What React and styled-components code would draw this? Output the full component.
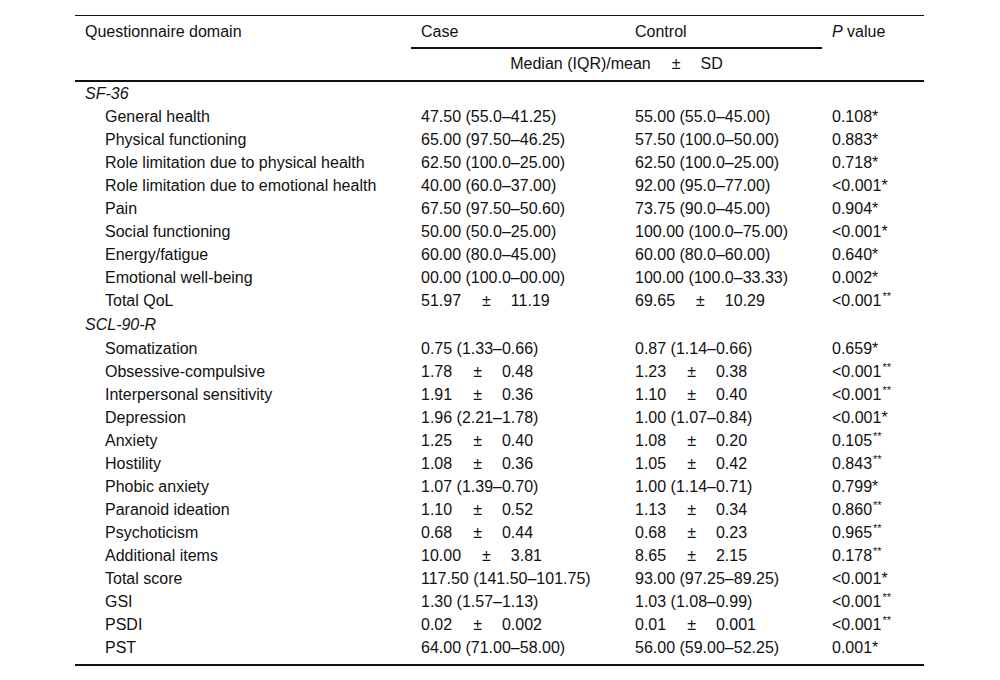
import React from "react";
import styled, { createGlobalStyle } from "styled-components";

const GlobalStyle = createGlobalStyle`
	body {
		margin: 0;
		background: #fff;
		color: #111;
		font-family: "Liberation Sans", Arial, sans-serif;
	}
`;

const sf36 = [
	["General health", "47.50 (55.0–41.25)", "55.00 (55.0–45.00)", "0.108", 1],
	["Physical functioning", "65.00 (97.50–46.25)", "57.50 (100.0–50.00)", "0.883", 1],
	["Role limitation due to physical health", "62.50 (100.0–25.00)", "62.50 (100.0–25.00)", "0.718", 1],
	["Role limitation due to emotional health", "40.00 (60.0–37.00)", "92.00 (95.0–77.00)", "<0.001", 1],
	["Pain", "67.50 (97.50–50.60)", "73.75 (90.0–45.00)", "0.904", 1],
	["Social functioning", "50.00 (50.0–25.00)", "100.00 (100.0–75.00)", "<0.001", 1],
	["Energy/fatigue", "60.00 (80.0–45.00)", "60.00 (80.0–60.00)", "0.640", 1],
	["Emotional well-being", "00.00 (100.0–00.00)", "100.00 (100.0–33.33)", "0.002", 1],
	["Total QoL", "51.97|11.19", "69.65|10.29", "<0.001", 2],
];

const scl90 = [
	["Somatization", "0.75 (1.33–0.66)", "0.87 (1.14–0.66)", "0.659", 1],
	["Obsessive-compulsive", "1.78|0.48", "1.23|0.38", "<0.001", 2],
	["Interpersonal sensitivity", "1.91|0.36", "1.10|0.40", "<0.001", 2],
	["Depression", "1.96 (2.21–1.78)", "1.00 (1.07–0.84)", "<0.001", 1],
	["Anxiety", "1.25|0.40", "1.08|0.20", "0.105", 2],
	["Hostility", "1.08|0.36", "1.05|0.42", "0.843", 2],
	["Phobic anxiety", "1.07 (1.39–0.70)", "1.00 (1.14–0.71)", "0.799", 1],
	["Paranoid ideation", "1.10|0.52", "1.13|0.34", "0.860", 2],
	["Psychoticism", "0.68|0.44", "0.68|0.23", "0.965", 2],
	["Additional items", "10.00|3.81", "8.65|2.15", "0.178", 2],
	["Total score", "117.50 (141.50–101.75)", "93.00 (97.25–89.25)", "<0.001", 1],
	["GSI", "1.30 (1.57–1.13)", "1.03 (1.08–0.99)", "<0.001", 2],
	["PSDI", "0.02|0.002", "0.01|0.001", "<0.001", 2],
	["PST", "64.00 (71.00–58.00)", "56.00 (59.00–52.25)", "0.001", 1],
];

const Page = styled.div`
	padding: 15px 76px 0 75px;
`;

const Table = styled.table`
	width: 100%;
	border-collapse: separate;
	border-spacing: 0;
	font-size: 16px;
	table-layout: fixed;
	border-top: 1px solid #111;
	border-bottom: 2px solid #111;
`;

const Th = styled.th`
	font-weight: normal;
	text-align: ${(p) => (p.$center ? "center" : "left")};
	vertical-align: top;
	line-height: 23px;
	padding: ${(p) => (p.$second ? "3px 10px 5px" : "4px 10px 4px")};
	border-bottom: ${(p) => (p.$rule ? "2px solid #111" : "none")};
`;

const CaseTh = styled(Th)`
	border-bottom: 2px solid #111;
`;

const Td = styled.td`
	line-height: 23px;
	height: 23px;
	padding: 0 10px 0 ${(p) => (p.$indent ? "30px" : "10px")};
	white-space: nowrap;
	font-style: ${(p) => (p.$italic ? "italic" : "normal")};
`;

const Row = styled.tr`
	& > td {
		padding-top: ${(p) => (p.$gap ? "1px" : "0")};
		padding-bottom: ${(p) => (p.$last ? "5px" : "0")};
	}
`;

const PlusMinus = styled.span`
	margin: 0 20px 0 21px;
`;

const Star = styled.sup`
	font-size: 11px;
	line-height: 0;
	vertical-align: 6px;
	margin-left: 1px;
`;

const Value = ({ text }) => {
	if (text.includes("|")) {
		const [a, b] = text.split("|");
		return (
			<>
				{a}
				<PlusMinus>±</PlusMinus>
				{b}
			</>
		);
	}
	return text;
};

const PValue = ({ value, stars }) =>
	stars === 2 ? (
		<>
			{value}
			<Star>**</Star>
		</>
	) : (
		`${value}*`
	);

const Section = ({ title, rows, gap, last }) => (
	<>
		<Row $gap={gap}>
			<Td $italic colSpan={4}>
				{title}
			</Td>
		</Row>
		{rows.map((r, i) => (
			<Row key={r[0]} $gap={gap && i === 0} $last={last && i === rows.length - 1}>
				<Td $indent>{r[0]}</Td>
				<Td>
					<Value text={r[1]} />
				</Td>
				<Td>
					<Value text={r[2]} />
				</Td>
				<Td>
					<PValue value={r[3]} stars={r[4]} />
				</Td>
			</Row>
		))}
	</>
);

const App = () => (
	<Page>
		<GlobalStyle />
		<Table>
			<colgroup>
				<col style={{ width: 336 }} />
				<col style={{ width: 214 }} />
				<col style={{ width: 197 }} />
				<col style={{ width: 102 }} />
			</colgroup>
			<thead>
				<tr>
					<Th rowSpan={2} $rule>
						Questionnaire domain
					</Th>
					<CaseTh>Case</CaseTh>
					<CaseTh>Control</CaseTh>
					<Th rowSpan={2} $rule>
						<i>P</i> value
					</Th>
				</tr>
				<tr>
					<Th colSpan={2} $center $second $rule>
						Median (IQR)/mean
						<PlusMinus>±</PlusMinus>
						SD
					</Th>
				</tr>
			</thead>
			<tbody>
				<Section title="SF-36" rows={sf36} />
				<Section title="SCL-90-R" rows={scl90} gap last />
			</tbody>
		</Table>
	</Page>
);

export default App;
